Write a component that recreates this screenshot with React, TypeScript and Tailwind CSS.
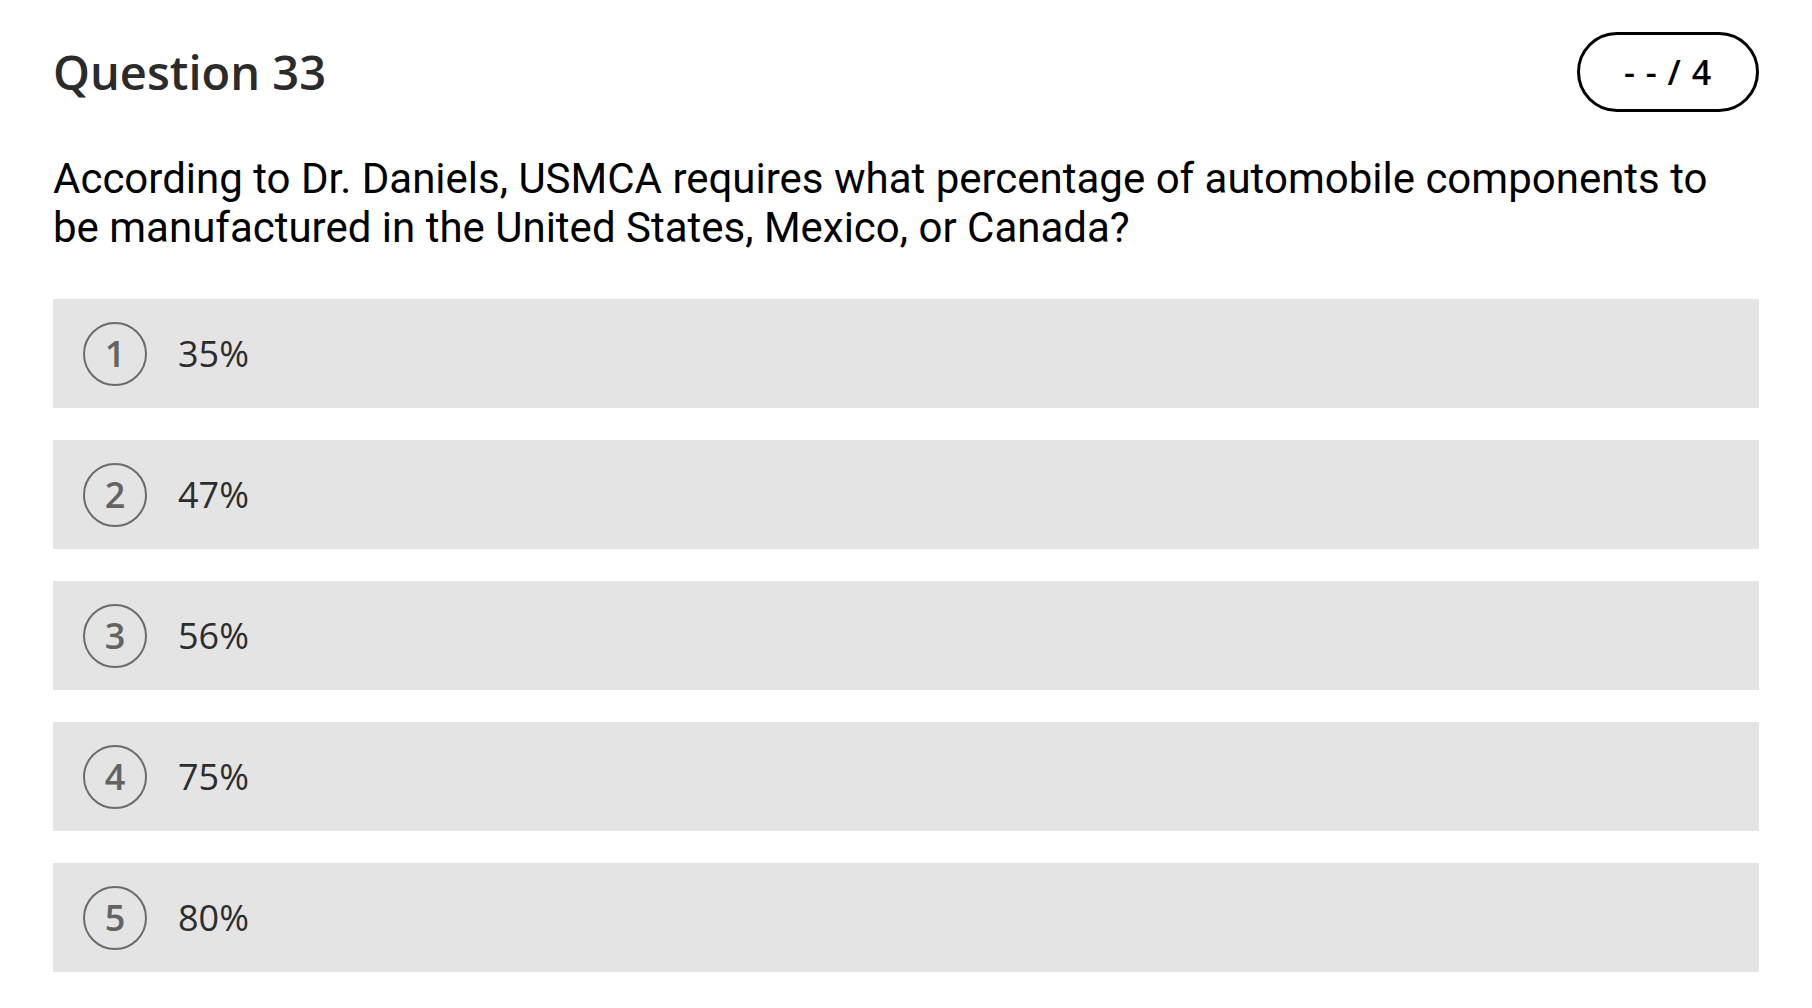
import React from "react";

type Choice = {
	num: string;
	label: string;
};

const choices: Choice[] = [
	{ num: "1", label: "35%" },
	{ num: "2", label: "47%" },
	{ num: "3", label: "56%" },
	{ num: "4", label: "75%" },
	{ num: "5", label: "80%" },
];

const ChoiceRow = ({ choice }: { choice: Choice }) => {
	return (
		<div className="flex items-center h-[109px] bg-[#e4e4e4] pl-[30px]">
			<div className="w-[64px] h-[64px] rounded-full border-2 border-[#6b6b6b] flex items-center justify-center text-[36px] font-semibold text-[#636363] leading-none">
				{choice.num}
			</div>
			<div className="ml-[31px] text-[36px] text-[#2d2d2d] leading-none">
				{choice.label}
			</div>
		</div>
	);
};

const App = () => {
	return (
		<div className="min-h-screen bg-white px-[53px] pt-[32px] font-['Open_Sans',sans-serif]">
			<div className="flex items-center justify-between h-[80px]">
				<h1 className="text-[47px] font-semibold text-[#2b2b2b] leading-none">
					Question 33
				</h1>
				<div className="w-[182px] h-[80px] rounded-full border-[3px] border-black flex items-center justify-center text-[34px] font-semibold text-black tracking-[0.03em]">
					- - / 4
				</div>
			</div>
			<p className="mt-[42px] pr-[30px] font-['Roboto',sans-serif] text-[42px] leading-[49px] text-black">
				According to Dr. Daniels, USMCA requires what percentage of automobile components to be manufactured in the United States, Mexico, or Canada?
			</p>
			<div className="mt-[47px] flex flex-col gap-[32px]">
				{choices.map((c) => (
					<ChoiceRow key={c.num} choice={c} />
				))}
			</div>
		</div>
	);
};

export default App;
